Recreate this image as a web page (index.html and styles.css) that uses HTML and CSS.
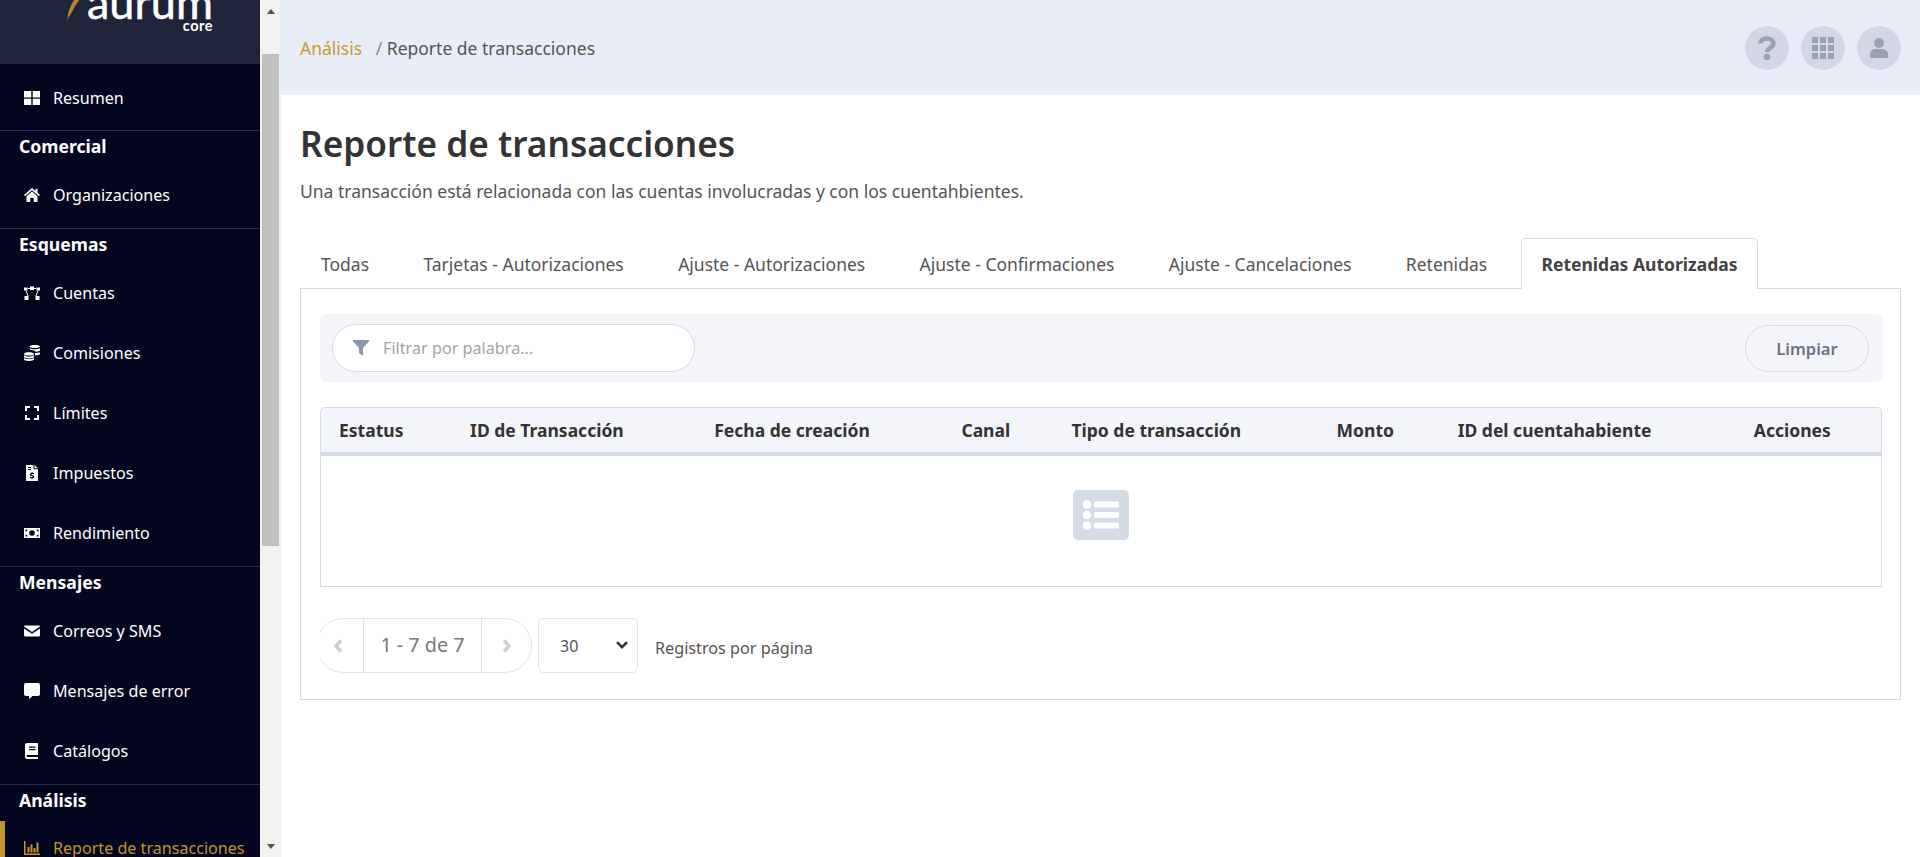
FILE: index.html
```html
<!DOCTYPE html>
<html lang="es">
<head>
  <meta charset="utf-8" />
  <title>Reporte de transacciones - Aurum Core</title>
  <link rel="stylesheet" href="styles.css">
</head>
<body>
  <div class="app">
    <!-- Sidebar -->
    <nav class="sidebar">
      <div class="logo">
        <svg class="logo-mark" viewBox="0 0 12 22"><path fill="#b9862d" d="M12 0H7C3 6 .5 13 .3 21 2 15 5 13 7 8 8.500 5 11 2 12 0Z"/></svg>
        <div class="logo-text">
          <span class="logo-name">aurum</span>
          <span class="logo-sub">core</span>
        </div>
      </div>

      <div class="nav-section nav-first">
        <a class="nav-item">
          <svg class="nav-icon" viewBox="0 0 16 16"><path d="M0 1h7.300v6.400H0zM8.700 1H16v6.400H8.700zM0 8.700h7.300V15H0zM8.700 8.700H16V15H8.700z"/></svg>
          Resumen
        </a>
      </div>

      <div class="nav-section">
        <h4>Comercial</h4>
        <a class="nav-item">
          <svg class="nav-icon" viewBox="0 0 16 16"><path d="M8 1 0 8l1 1.200L8 3.200l7 6L16 8l-2.500-2.200V2h-2v2L8 1zM8 4.500 2.500 9.200V15h3.800v-4h3.400v4h3.800V9.200L8 4.500z"/></svg>
          Organizaciones
        </a>
      </div>

      <div class="nav-section">
        <h4>Esquemas</h4>
        <a class="nav-item">
          <svg class="nav-icon" viewBox="0 0 16 16"><path d="M0 2.500h3.500v3H0zM6 1.500h4v3.500H6zM12.500 2.500H16v3h-3.500zM.5 11h4v4h-4zM11.500 11h4v4h-4z"/><path fill="none" stroke="currentColor" d="M3.500 3.500H6M10 3.500h2.500M2 5.500 4 11M14 5.500 12 11"/></svg>
          Cuentas
        </a>
        <a class="nav-item">
          <svg class="nav-icon" viewBox="0 0 16 16"><path d="M5.500 1.500C5.500.6 7.500 0 10.700 0S16 .6 16 1.500 14 3 10.700 3 5.500 2.400 5.500 1.500zM5 7.200C2.200 7.200 0 7.900 0 8.900s2.200 1.700 5 1.700 5-.7 5-1.700-2.200-1.700-5-1.700zM0 10.300V11.700c0 1 2.200 1.700 5 1.700s5-.7 5-1.700v-1.400c-1 .8-2.900 1.200-5 1.200s-4-.4-5-1.200zM0 13.100v1.200C0 15.300 2.200 16 5 16s5-.7 5-1.700v-1.200c-1 .8-2.900 1.200-5 1.200s-4-.4-5-1.200zM11 8v2.500c2.900-.2 5-.9 5-1.800V7.200c-1 .5-2.800.8-5 .8zM6 3.200v1.600c3 .1 5.200.9 5.700 2 2.500-.1 4.300-.8 4.300-1.700V3.200c-1 .7-3 1.100-5.300 1.100S7 3.900 6 3.200z"/></svg>
          Comisiones
        </a>
        <a class="nav-item">
          <svg class="nav-icon" viewBox="0 0 16 16"><path d="M1 1h5v2H3v3H1zM10 1h5v5h-2V3h-3zM1 10h2v3h3v2H1zM13 10h2v5h-5v-2h3z"/></svg>
          Límites
        </a>
        <a class="nav-item">
          <svg class="nav-icon" viewBox="0 0 16 16"><path d="M2 0h7.500v4.300H14V16H2zM10.500 0 14 3.300h-3.500z"/><path fill="#04061f" d="M4 2h3v1H4zM4 4h3v1H4zM7.500 7h1v1c.8 0 1.300.2 1.600.4l-.4 1c-.4-.2-1-.4-1.600-.4-.5 0-.8.1-.8.4 0 .7 3 .4 3 2.300 0 .8-.6 1.300-1.800 1.500v1h-1v-1c-.7 0-1.400-.2-1.800-.5l.4-1c.5.3 1.100.5 1.800.5.6 0 .9-.2.900-.4 0-.8-3-.4-3-2.300 0-.9.600-1.400 1.700-1.500z"/></svg>
          Impuestos
        </a>
        <a class="nav-item">
          <svg class="nav-icon" viewBox="0 0 16 16"><path fill-rule="evenodd" d="M0 3h16v10H0zM8 5.200a2.800 2.800 0 1 0 0 5.600 2.800 2.800 0 0 0 0-5.600zM1.500 4.500v2a2 2 0 0 0 2-2zM12.500 4.500a2 2 0 0 0 2 2v-2zM1.500 9.500v2h2a2 2 0 0 0-2-2zM14.500 9.500a2 2 0 0 0-2 2h2z"/></svg>
          Rendimiento
        </a>
      </div>

      <div class="nav-section">
        <h4>Mensajes</h4>
        <a class="nav-item">
          <svg class="nav-icon" viewBox="0 0 16 16"><path d="M1.200 2.500h13.600c.7 0 1.200.5 1.200 1.100L8 9 0 3.600c0-.6.5-1.100 1.200-1.100zM0 5.400V12.300c0 .7.500 1.200 1.200 1.200h13.600c.7 0 1.200-.5 1.200-1.200V5.400L8 10.800z"/></svg>
          Correos y SMS
        </a>
        <a class="nav-item">
          <svg class="nav-icon" viewBox="0 0 16 16"><path d="M2 0h12c1.100 0 2 .9 2 2v9c0 1.100-.9 2-2 2H8.500L5 16v-3H2c-1.100 0-2-.9-2-2V2C0 .9.900 0 2 0z"/></svg>
          Mensajes de error
        </a>
        <a class="nav-item">
          <svg class="nav-icon" viewBox="0 0 16 16"><path fill-rule="evenodd" d="M3 0h10.500c.3 0 .5.200.5.500V12H3.500a1 1 0 0 0 0 2H14v2H3c-1 0-2-.8-2-2V2c0-1.200 1-2 2-2zM5 3.500v1.200h6.500V3.500zM5 6v1.200h6.500V6z"/></svg>
          Catálogos
        </a>
      </div>

      <div class="nav-section">
        <h4>Análisis</h4>
        <a class="nav-item active">
          <svg class="nav-icon" viewBox="0 0 16 16"><path d="M0 1h1.500v12.500H16V15H0zM3.500 7h2v5.500h-2zM6.500 4.500h2v8h-2zM9.500 8h2v4.500h-2zM12.500 2.500h2v10h-2z"/></svg>
          Reporte de transacciones
        </a>
      </div>
    </nav>

    <!-- Sidebar scrollbar -->
    <div class="scrollbar">
      <span class="scroll-arrow scroll-up"></span>
      <div class="scroll-thumb"></div>
      <span class="scroll-arrow scroll-down"></span>
    </div>

    <main class="main">
      <header class="topbar">
        <div class="breadcrumb">
          <a>Análisis</a>
          <span class="crumb-sep">/</span>
          <span>Reporte de transacciones</span>
        </div>
        <div class="top-actions">
          <button class="round-btn">
            <svg class="icon-help" viewBox="0 0 18 24"><path fill="none" stroke="currentColor" stroke-width="4.500" d="M2.500 7.500C2.500 4 5.500 2.500 9 2.500s6.500 1.800 6.500 5c0 4.500-6.300 4-6.300 8.500"/><circle cx="9" cy="21" r="3.300" fill="currentColor"/></svg>
          </button>
          <button class="round-btn">
            <svg class="icon-apps" viewBox="0 0 24 24"><path fill="currentColor" d="M1 1h6v6H1zM9 1h6v6H9zM17 1h6v6h-6zM1 9h6v6H1zM9 9h6v6H9zM17 9h6v6h-6zM1 17h6v6H1zM9 17h6v6H9zM17 17h6v6h-6z"/></svg>
          </button>
          <button class="round-btn">
            <svg class="icon-user" viewBox="0 0 18 20"><circle cx="9" cy="5" r="5" fill="currentColor"/><path fill="currentColor" d="M0 20v-3.500C0 13.500 2.500 11 5.500 11h7c3 0 5.500 2.500 5.500 5.500V20z"/></svg>
          </button>
        </div>
      </header>

      <section class="content">
        <h1>Reporte de transacciones</h1>
        <p class="subtitle">Una transacción está relacionada con las cuentas involucradas y con los cuentahbientes.</p>

        <ul class="tabs">
          <li>Todas</li>
          <li>Tarjetas - Autorizaciones</li>
          <li>Ajuste - Autorizaciones</li>
          <li>Ajuste - Confirmaciones</li>
          <li>Ajuste - Cancelaciones</li>
          <li>Retenidas</li>
          <li class="active">Retenidas Autorizadas</li>
        </ul>

        <div class="panel">
          <div class="filter-bar">
            <label class="search">
              <svg viewBox="0 0 16 16"><path fill="currentColor" d="M0 0h16v1.500L10 8v8L6 13V8L0 1.500z"/></svg>
              <input type="text" placeholder="Filtrar por palabra...">
            </label>
            <button class="clear-btn">Limpiar</button>
          </div>

          <table class="data-table">
            <colgroup>
              <col class="col-status">
              <col class="col-id">
              <col class="col-date">
              <col class="col-channel">
              <col class="col-type">
              <col class="col-amount">
              <col class="col-holder">
              <col class="col-actions">
            </colgroup>
            <thead>
              <tr>
                <th>Estatus</th>
                <th>ID de Transacción</th>
                <th>Fecha de creación</th>
                <th>Canal</th>
                <th>Tipo de transacción</th>
                <th>Monto</th>
                <th>ID del cuentahabiente</th>
                <th>Acciones</th>
              </tr>
            </thead>
            <tbody>
              <tr>
                <td colspan="8">
                  <svg class="empty-icon" viewBox="0 0 56 50">
                    <rect width="56" height="50" rx="5" fill="#d5dbe4"/>
                    <g fill="#fff">
                      <circle cx="14" cy="14.500" r="4.300"/>
                      <circle cx="14" cy="25" r="4.300"/>
                      <circle cx="14" cy="35.500" r="4.300"/>
                      <rect x="21" y="11.500" width="25" height="6" rx="1.500"/>
                      <rect x="21" y="22" width="25" height="6" rx="1.500"/>
                      <rect x="21" y="32.500" width="25" height="6" rx="1.500"/>
                    </g>
                  </svg>
                </td>
              </tr>
            </tbody>
          </table>

          <div class="pager-row">
            <div class="pager-clip">
              <div class="pager">
                <span class="pager-btn pager-prev">
                  <svg viewBox="0 0 10 14"><path fill="none" stroke="currentColor" stroke-width="3.500" d="M8 1.500 3 7l5 5.500"/></svg>
                </span>
                <span class="pager-info">1 - 7 de 7</span>
                <span class="pager-btn pager-next">
                  <svg viewBox="0 0 10 14"><path fill="none" stroke="currentColor" stroke-width="3.500" d="m2 1.500 5 5.500-5 5.500"/></svg>
                </span>
              </div>
            </div>
            <div class="page-size-wrap">
              <select class="page-size">
                <option>30</option>
                <option>50</option>
                <option>100</option>
              </select>
              <svg class="select-arrow" viewBox="0 0 12 8"><path fill="none" stroke="currentColor" stroke-width="2.500" d="m1 1.200 5 5 5-5"/></svg>
            </div>
            <span class="page-label">Registros por página</span>
          </div>
        </div>
      </section>
    </main>
  </div>
</body>
</html>
```

FILE: styles.css
```css
* {
  box-sizing: border-box;
}

html, body {
  height: 100%;
}

body {
  margin: 0;
  font-family: "Noto Sans", Arial, sans-serif;
  font-size: 16px;
  color: #444;
  background-color: #fff;
  overflow: hidden;
}

.app {
  display: flex;
  height: 100vh;
}

/* Sidebar */
.sidebar {
  width: 260px;
  flex-shrink: 0;
  height: 100%;
  overflow: hidden;
  background-color: #04061f;
  color: #fff;
  font-size: 16.1px;
}

.logo {
  display: flex;
  align-items: flex-start;
  height: 64px;
  overflow: hidden;
  padding-left: 67px;
  background-color: #20243a;
}

.logo-mark {
  width: 12px;
  height: 22px;
  flex-shrink: 0;
}

.logo-text {
  display: flex;
  flex-direction: column;
  align-items: flex-end;
  margin-left: 8px;
  padding-top: 21px;
}

/* the wordmark is cut by the top of the page, as the sidebar is scrolled */
.logo-name {
  display: block;
  height: 0;
  line-height: 0;
  margin-top: -19px;
  margin-bottom: 19px;
  font-family: Lato, sans-serif;
  font-size: 45px;
  font-weight: 400;
  -webkit-text-stroke: 0.5px #fff;
  color: #fff;
}

.logo-sub {
  font-family: Lato, sans-serif;
  font-size: 14.5px;
  font-weight: 700;
  line-height: 9px;
  letter-spacing: 0.5px;
  color: #fff;
}

.nav-section {
  border-top: 1px solid #2a2c45;
}

.nav-first {
  border-top: none;
  padding-top: 6.5px;
}

.nav-first .nav-item {
  margin-bottom: 5px;
}

.nav-section h4 {
  margin: 0 0 3px;
  height: 33.5px;
  padding-left: 19px;
  font-size: 17.6px;
  font-weight: 700;
  line-height: 30px;
  color: #fff;
}

.nav-first + .nav-section h4 {
  height: 34.5px;
}

.nav-item {
  display: flex;
  align-items: center;
  height: 54.1px;
  margin-bottom: 6px;
  padding-left: 24px;
  color: #fff;
  cursor: pointer;
}

.nav-item.active {
  color: #c0952a;
  padding-left: 19px;
  border-left: 5px solid #c0952a;
}

.nav-icon {
  width: 16px;
  height: 16px;
  flex-shrink: 0;
  margin-right: 13px;
  fill: currentColor;
}

/* Scrollbar */
.scrollbar {
  display: flex;
  flex-direction: column;
  align-items: center;
  width: 21px;
  flex-shrink: 0;
  height: 100%;
  background-color: #f1f1f1;
}

.scroll-thumb {
  width: 17px;
  height: 492px;
  margin-top: 40px;
  margin-bottom: auto;
  background-color: #c1c1c1;
}

.scroll-arrow {
  width: 0;
  height: 0;
  border-left: 4.5px solid transparent;
  border-right: 4.5px solid transparent;
}

.scroll-up {
  margin-top: 9px;
  border-bottom: 5px solid #505050;
}

.scroll-down {
  margin-bottom: 8px;
  border-top: 5px solid #505050;
}

/* Main area */
.main {
  flex: 1;
  min-width: 0;
}

.topbar {
  display: flex;
  align-items: center;
  justify-content: space-between;
  height: 95px;
  padding: 0 19px;
  background-color: #e9edf7;
}

.breadcrumb {
  font-size: 17.5px;
  color: #555;
}

.breadcrumb a {
  color: #c9992c;
}

.crumb-sep {
  margin-left: 9px;
  color: #888;
}

.top-actions {
  display: flex;
  gap: 12px;
}

.round-btn {
  display: flex;
  align-items: center;
  justify-content: center;
  width: 44px;
  height: 44px;
  padding: 0;
  border: none;
  border-radius: 50%;
  background-color: #d2d7e3;
  color: #98a2b5;
}

.icon-help {
  width: 18px;
  height: 24px;
}

.icon-apps {
  width: 24px;
  height: 24px;
}

.icon-user {
  width: 18px;
  height: 20px;
}

.content {
  padding: 25px 19px 0;
}

h1 {
  margin: 0 0 12px;
  font-size: 35.2px;
  font-weight: 600;
  line-height: 47px;
  color: #333;
}

.subtitle {
  margin: 0 0 35px;
  font-size: 17.5px;
  line-height: 24px;
  color: #555;
}

/* Tabs */
.tabs {
  display: flex;
  gap: 12.4px;
  height: 50px;
  margin: 0;
  padding: 0;
  list-style: none;
}

.tabs li {
  height: 51px;
  padding: 0 20px;
  border: 1px solid transparent;
  border-bottom: none;
  font-size: 17.5px;
  line-height: 51px;
  color: #555;
}

.tabs li.active {
  position: relative;
  z-index: 1;
  background-color: #fff;
  border-color: #d5dbe4;
  border-radius: 5px 5px 0 0;
  font-weight: 700;
  color: #444;
}

.panel {
  height: 412px;
  padding: 25px 18px 0 19px;
  border: 1px solid #d5dbe4;
}

/* Filter bar */
.filter-bar {
  display: flex;
  align-items: center;
  justify-content: space-between;
  height: 68px;
  padding: 0 13px 0 12px;
  border-radius: 6px;
  background-color: #f4f5fa;
}

.search {
  display: flex;
  align-items: center;
  width: 363px;
  height: 48px;
  padding: 0 20px;
  border: 1px solid #d5dbe4;
  border-radius: 24px;
  background-color: #fff;
  color: #8d97ab;
}

.search svg {
  width: 16px;
  height: 16px;
  flex-shrink: 0;
}

.search input {
  flex: 1;
  min-width: 0;
  margin-left: 14px;
  padding: 0;
  border: none;
  outline: none;
  background: transparent;
  font-family: inherit;
  font-size: 16.2px;
  color: #555;
}

.search input::placeholder {
  color: #a3a3a3;
}

.clear-btn {
  width: 124px;
  height: 47px;
  border: 1px solid #d5dbe4;
  border-radius: 24px;
  background-color: transparent;
  font-family: inherit;
  font-size: 16.5px;
  font-weight: 600;
  color: #6b7280;
}

/* Table */
.data-table {
  width: 100%;
  margin-top: 25px;
  table-layout: fixed;
  border-collapse: separate;
  border-spacing: 0;
}

.col-status { width: 130px; }
.col-id { width: 244px; }
.col-date { width: 247px; }
.col-channel { width: 110px; }
.col-type { width: 265px; }
.col-amount { width: 121px; }
.col-holder { width: 296px; }
.col-actions { width: 148px; }

.data-table th {
  height: 49px;
  padding: 0 0 0 20px;
  border-top: 1px solid #d5dbe4;
  border-bottom: 4px solid #d5dbe4;
  background-color: #f4f5fa;
  font-size: 17.5px;
  font-weight: 700;
  text-align: left;
  color: #333;
}

.data-table th:first-child {
  padding-left: 18px;
  border-left: 1px solid #d5dbe4;
  border-top-left-radius: 5px;
}

.data-table th:last-child {
  border-right: 1px solid #d5dbe4;
  border-top-right-radius: 5px;
}

.data-table td {
  height: 131px;
  padding: 34px 0 0;
  border: 1px solid #d5dbe4;
  border-top: none;
  text-align: center;
  vertical-align: top;
}

.empty-icon {
  display: block;
  width: 56px;
  height: 50px;
  margin: 0 auto;
}

/* Pagination */
.pager-row {
  display: flex;
  align-items: center;
  margin-top: 31px;
}

.pager-clip {
  overflow: hidden;
  flex-shrink: 0;
}

.pager {
  display: flex;
  align-items: stretch;
  width: 216px;
  height: 55px;
  margin-left: -4px;
  border: 1px solid #dfe3ea;
  border-radius: 28px;
}

.pager-btn {
  display: flex;
  align-items: center;
  justify-content: center;
  color: #cfcfcf;
}

.pager-prev {
  width: 46px;
  padding-right: 4px;
}

.pager-next {
  flex: 1;
}

.pager-btn svg {
  width: 10px;
  height: 14px;
}

.pager-info {
  width: 119px;
  border-left: 1px solid #dfe3ea;
  border-right: 1px solid #dfe3ea;
  font-size: 19.8px;
  line-height: 51px;
  text-align: center;
  color: #7c7774;
}

.page-size-wrap {
  position: relative;
  width: 100px;
  height: 55px;
  margin-left: 6px;
}

.page-size {
  width: 100%;
  height: 100%;
  padding-left: 21px;
  border: 1px solid #dfe3ea;
  border-radius: 6px;
  background-color: #fff;
  appearance: none;
  font-family: inherit;
  font-size: 16px;
  color: #555;
}

.select-arrow {
  position: absolute;
  top: 23px;
  right: 10px;
  width: 12px;
  height: 8px;
  color: #333;
  pointer-events: none;
}

.page-label {
  margin-left: 17px;
  margin-top: 4px;
  font-size: 16.2px;
  color: #555;
}
```
